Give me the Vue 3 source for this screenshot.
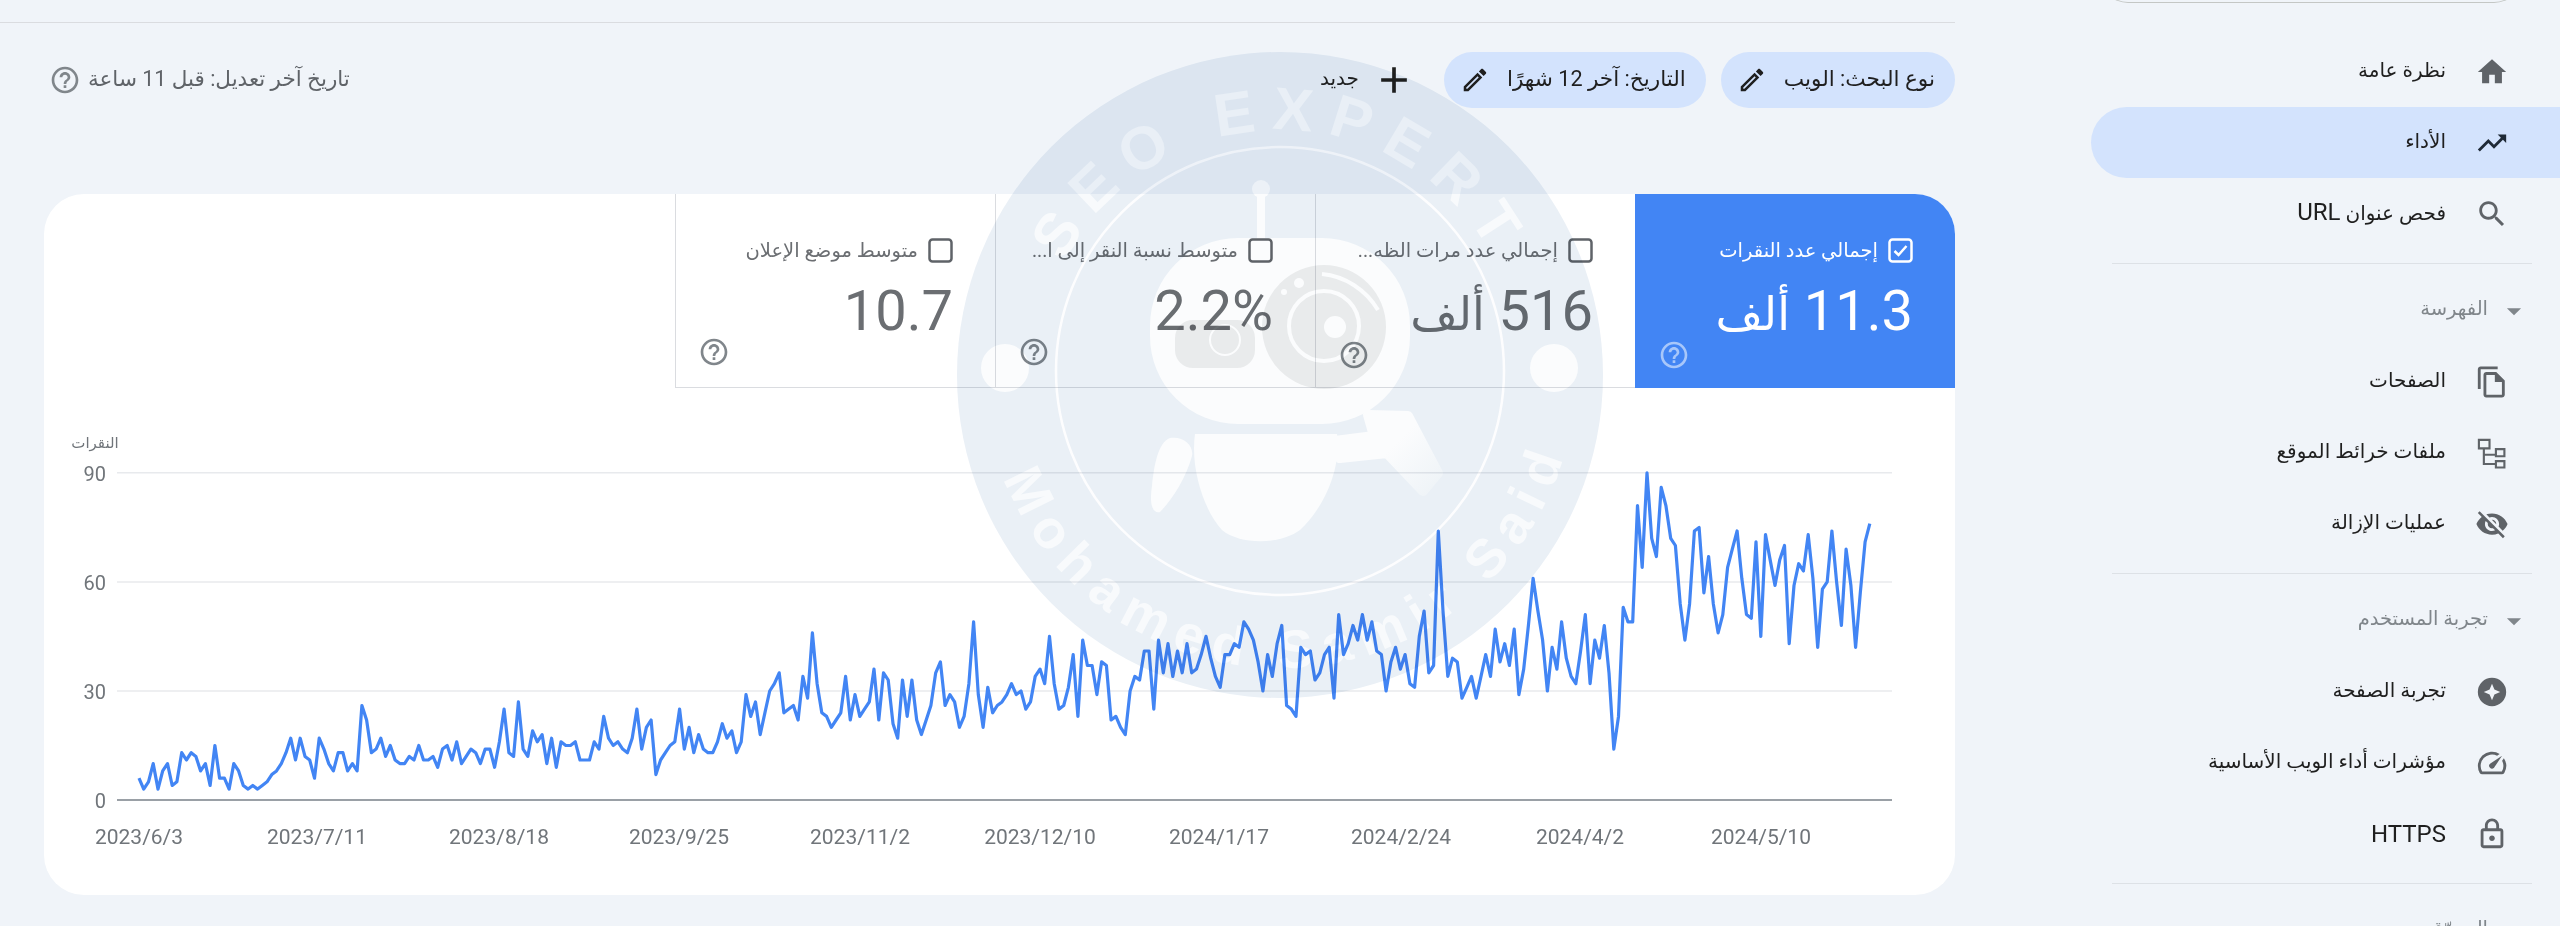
<template>
  <div class="page">
    <aside class="sidebar">
      <div class="search-stub"></div>
      <nav class="nav">
        <template v-for="(group, gi) in navGroups" :key="gi">
          <div v-if="group.title" class="nav-head">
            <svg class="caret" viewBox="0 0 24 24"><path d="M7 10l5 5 5-5z" /></svg>
            <span class="nudge">{{ group.title }}</span>
          </div>
          <a
            v-for="item in group.items"
            :key="item.label + item.latin"
            class="nav-item"
            :class="{ active: item.active }"
          >
            <svg class="nav-icon" viewBox="0 0 24 24"><path fill-rule="evenodd" :d="icons[item.icon]" /></svg>
            <span :class="{ nudge: item.label }">{{ item.label }} <span v-if="item.latin" class="latin">{{ item.latin }}</span></span>
          </a>
          <div v-if="gi < navGroups.length - 1" class="nav-divider"></div>
        </template>
      </nav>
    </aside>

    <main class="main">
      <div class="top-rule"></div>

      <div class="toolbar">
        <button v-for="chip in chips" :key="chip" class="chip">
          <span class="nudge">{{ chip }}</span>
          <svg class="chip-icon" viewBox="0 0 24 24"><path :d="icons.edit" /></svg>
        </button>
        <button class="add-btn">
          <svg class="add-icon" viewBox="0 0 24 24"><path d="M19 13h-6v6h-2v-6H5v-2h6V5h2v6h6v2z" /></svg>
          <span class="nudge">جديد</span>
        </button>
        <div class="updated">
          <span class="nudge">تاريخ آخر تعديل: قبل 11 ساعة</span>
          <svg class="help" viewBox="0 0 24 24"><path :d="icons.help" /></svg>
        </div>
      </div>

      <section class="card">
        <div class="tiles">
          <div v-for="tile in tiles" :key="tile.label" class="tile" :class="{ selected: tile.selected }">
            <div class="tile-label">
              <svg class="check" viewBox="0 0 25 25">
                <rect x="1.5" y="1.5" width="22" height="22" rx="3" />
                <path v-if="tile.selected" d="M6.5 13l4 4 8-9" />
              </svg>
              <span>{{ tile.label }}</span>
            </div>
            <div class="tile-value">{{ tile.value }} <span v-if="tile.unit" class="unit">{{ tile.unit }}</span></div>
            <svg class="help tile-help" viewBox="0 0 24 24"><path :d="icons.help" /></svg>
          </div>
        </div>

        <svg class="chart" viewBox="44 388 1911 507">
          <text class="axis-title" x="95" y="448">النقرات</text>
          <g v-for="tick in yTicks" :key="tick.label">
            <line class="grid" :class="{ base: tick.label === 0 }" x1="117" x2="1892" :y1="tick.y" :y2="tick.y" />
            <text class="y-label" x="106" :y="tick.y + 8">{{ tick.label }}</text>
          </g>
          <text v-for="d in xTicks" :key="d.label" class="x-label" :x="d.x" y="844">{{ d.label }}</text>
          <polyline class="line" :points="linePoints" />
        </svg>
      </section>
    </main>

    <!-- watermark stamp, multiplied over the screenshot so text stays dark -->
    <svg class="stamp" viewBox="0 0 2560 926">
      <defs>
        <linearGradient id="handle-fade" x1="1370" y1="420" x2="1440" y2="490" gradientUnits="userSpaceOnUse">
          <stop offset="0.35" stop-color="#fbfcfd" />
          <stop offset="1" stop-color="#eef3f7" />
        </linearGradient>
        <path id="stamp-top" d="M1038 372A242 242 0 0 1 1522 372" />
        <path id="stamp-bottom" d="M984 372A296 296 0 0 0 1576 372" />
      </defs>
      <circle cx="1280" cy="375" r="323" fill="#eaf0f6" />
      <circle cx="1280" cy="371" r="224" fill="none" stroke="#fdfdfe" stroke-width="2.5" />
      <g fill="#fbfcfd">
        <circle cx="1005" cy="368" r="24" />
        <circle cx="1554" cy="368" r="24" />
        <circle cx="1261" cy="189" r="9" />
        <rect x="1257" y="195" width="8" height="48" />
        <rect x="1150" y="238" width="260" height="186" rx="88" />
        <path d="M1195 434H1337C1342 470 1322 510 1300 530 1280 545 1240 545 1222 530 1205 512 1190 470 1195 434Z" />
        <path d="M1170 438C1184 436 1194 446 1192 456 1186 478 1172 500 1160 512 1150 514 1150 498 1152 486 1154 466 1158 442 1170 438Z" />
      </g>
      <path
        fill="url(#handle-fade)"
        stroke="url(#handle-fade)"
        stroke-width="10"
        stroke-linejoin="round"
        d="M1335 441 1374 436 1368 415 1408 416 1438 473 1423 491 1387 453 1340 458Z"
      />
      <g fill="#e9ebec">
        <circle cx="1324" cy="327" r="62" />
        <rect x="1175" y="320" width="80" height="48" rx="18" />
      </g>
      <g fill="none" stroke="#fbfcfd">
        <circle cx="1324" cy="326" r="35" stroke-width="4" />
        <circle cx="1225" cy="340" r="15" stroke-width="2" />
        <path d="M1322 274C1345 276 1366 290 1378 310" stroke-width="4" />
      </g>
      <g fill="#fbfcfd">
        <circle cx="1335" cy="327" r="11" />
        <circle cx="1299" cy="283" r="5" />
        <circle cx="1284" cy="292" r="3" />
      </g>
      <text class="stamp-text top">
        <textPath href="#stamp-top" startOffset="50%">SEO EXPERT</textPath>
      </text>
      <text class="stamp-text bottom">
        <textPath href="#stamp-bottom" startOffset="51.7%">Mohamed Samir Said</textPath>
      </text>
    </svg>
  </div>
</template>

<script setup>
import { computed } from 'vue'

const icons = {
  home: 'M10 20v-6h4v6h5v-8h3L12 3 2 12h3v8z',
  trend: 'M16 6l2.29 2.29-4.88 4.88-4-4L2 16.59 3.41 18l6-6 4 4 6.3-6.29L22 12V6z',
  search: 'M15.5 14h-.79l-.28-.27C15.41 12.59 16 11.11 16 9.5 16 5.91 13.09 3 9.5 3S3 5.91 3 9.5 5.91 16 9.5 16c1.61 0 3.09-.59 4.23-1.57l.27.28v.79l5 4.99L20.49 19l-4.99-5zm-6 0C7.01 14 5 11.99 5 9.5S7.01 5 9.5 5 14 7.01 14 9.5 11.99 14 9.5 14z',
  pages: 'M16 1H4c-1.1 0-2 .9-2 2v14h2V3h12V1zm-1 4H8c-1.1 0-1.99.9-1.99 2L6 21c0 1.1.89 2 1.99 2H19c1.1 0 2-.9 2-2V11l-6-6zM8 21V7h6v5h5v9H8z',
  sitemap: 'M2 2h9v7.5H2zM3.5 3.5V8h6V3.5zM5.5 9.5H7v3h7v1.5H7v5h7v1.5H5.5zM14 8.5h7.5V15H14zM15.5 10v3.5H20V10zM14 17h7.5v6H14zM15.5 18.5v3H20v-3z',
  hidden: 'M12 7c2.76 0 5 2.24 5 5 0 .65-.13 1.26-.36 1.83l2.92 2.92c1.51-1.26 2.7-2.89 3.43-4.75-1.73-4.39-6-7.5-11-7.5-1.4 0-2.74.25-3.98.7l2.16 2.16C10.74 7.13 11.35 7 12 7zM2 4.27l2.28 2.28.46.46C3.08 8.3 1.78 10.02 1 12c1.73 4.39 6 7.5 11 7.5 1.55 0 3.03-.3 4.38-.84l.42.42L19.73 22 21 20.73 3.27 3 2 4.27zM7.53 9.8l1.55 1.55c-.05.21-.08.43-.08.65 0 1.66 1.34 3 3 3 .22 0 .44-.03.65-.08l1.55 1.55c-.67.33-1.41.53-2.2.53-2.76 0-5-2.24-5-5 0-.79.2-1.53.53-2.2zm4.31-.78l3.15 3.15.02-.16c0-1.66-1.34-3-3-3l-.17.01z',
  spark: 'M12 2a10 10 0 1 0 0 20 10 10 0 0 0 0-20zM12 6.2l1.7 4.1 4.1 1.7-4.1 1.7-1.7 4.1-1.7-4.1-4.1-1.7 4.1-1.7z',
  speed: 'M20.38 8.57l-1.23 1.85a8 8 0 0 1-.22 7.58H5.07A8 8 0 0 1 15.58 6.85l1.85-1.23A10 10 0 0 0 3.35 19a2 2 0 0 0 1.72 1h13.85a2 2 0 0 0 1.74-1 10 10 0 0 0-.27-10.44zm-9.79 6.84a2 2 0 0 0 2.83 0l5.66-8.49-8.49 5.66a2 2 0 0 0 0 2.83z',
  lock: 'M18 8h-1V6c0-2.76-2.24-5-5-5S7 3.24 7 6v2H6c-1.1 0-2 .9-2 2v10c0 1.1.9 2 2 2h12c1.1 0 2-.9 2-2V10c0-1.1-.9-2-2-2zM9 6c0-1.66 1.34-3 3-3s3 1.34 3 3v2H9V6zM18 20H6V10h12v10zM12 17c1.1 0 2-.9 2-2s-.9-2-2-2-2 .9-2 2 .9 2 2 2z',
  edit: 'M3 17.25V21h3.75L17.81 9.94l-3.75-3.75L3 17.25zM5.92 19H5v-.92l9.06-9.06.92.92L5.92 19zM20.71 5.63l-2.34-2.34c-.2-.2-.45-.29-.71-.29s-.51.1-.7.29l-1.83 1.83 3.75 3.75 1.83-1.83c.39-.39.39-1.02 0-1.41z',
  help: 'M11 18h2v-2h-2v2zm1-16C6.48 2 2 6.48 2 12s4.48 10 10 10 10-4.48 10-10S17.52 2 12 2zm0 18c-4.41 0-8-3.59-8-8s3.59-8 8-8 8 3.59 8 8-3.59 8-8 8zm0-14c-2.21 0-4 1.79-4 4h2c0-1.1.9-2 2-2s2 .9 2 2c0 2-3 1.75-3 5h2c0-2.25 3-2.5 3-5 0-2.21-1.79-4-4-4z'
}

const navGroups = [
  {
    items: [
      { label: 'نظرة عامة', icon: 'home' },
      { label: 'الأداء', icon: 'trend', active: true },
      { label: 'فحص عنوان', latin: 'URL', icon: 'search' }
    ]
  },
  {
    title: 'الفهرسة',
    items: [
      { label: 'الصفحات', icon: 'pages' },
      { label: 'ملفات خرائط الموقع', icon: 'sitemap' },
      { label: 'عمليات الإزالة', icon: 'hidden' }
    ]
  },
  {
    title: 'تجربة المستخدم',
    items: [
      { label: 'تجربة الصفحة', icon: 'spark' },
      { label: 'مؤشرات أداء الويب الأساسية', icon: 'speed' },
      { label: '', latin: 'HTTPS', icon: 'lock' }
    ]
  },
  { title: 'التسوّق', items: [] }
]

const chips = ['نوع البحث: الويب', 'التاريخ: آخر 12 شهرًا']

const tiles = [
  { label: 'إجمالي عدد النقرات', value: '11.3', unit: 'ألف', selected: true },
  { label: 'إجمالي عدد مرات الظه...', value: '516', unit: 'ألف' },
  { label: 'متوسط نسبة النقر إلى ا...', value: '2.2%' },
  { label: 'متوسط موضع الإعلان', value: '10.7' }
]

// daily clicks, read off the chart
const clicks = [
  6, 3, 5, 10, 3, 8, 10, 4, 5, 13, 11, 13, 12, 8, 10, 4, 15, 6, 6, 3, 10, 8, 4, 3, 4, 3, 4, 5, 7, 8, 10, 13, 17, 11, 17, 12,
  11, 6, 17, 14, 10, 8, 13, 13, 8, 10, 8, 26, 22, 13, 14, 17, 12, 15, 11, 10, 10, 12, 11, 15, 11, 11, 12, 9, 14, 15, 11, 16,
  10, 12, 14, 13, 10, 14, 14, 9, 16, 25, 13, 12, 27, 14, 12, 19, 16, 18, 10, 17, 9, 16, 15, 15, 16, 11, 11, 11, 16, 14, 23,
  17, 15, 16, 14, 13, 17, 25, 14, 20, 22, 7, 11, 13, 15, 16, 25, 14, 20, 13, 18, 14, 13, 13, 16, 21, 17, 19, 13,
  16, 29, 23, 27, 18, 24, 30, 32, 35, 24, 25, 26, 22, 34, 28, 46, 32, 24, 23, 20, 22, 24, 34, 22, 29, 23, 25, 27, 36, 22, 35,
  33, 21, 17, 33, 23, 33, 22, 18, 22, 26, 35, 38, 26, 29, 27, 20, 23, 32, 49, 29, 20, 31, 24, 26, 27, 29, 32, 29, 30, 25, 27,
  34, 36, 32, 45, 32, 25, 26, 31, 40, 23, 44, 37, 37, 29, 38, 37, 22, 23, 20, 18, 30, 34, 33, 41, 41, 25, 44, 35, 43, 34, 41,
  35, 43, 35, 36, 40, 45, 39, 34, 31, 40, 40, 43, 42, 49, 47, 44, 38, 30, 40, 34, 43, 48, 26, 25, 23,
  42, 40, 41, 33, 35, 40, 42, 28, 51, 40, 43, 48, 44, 51, 44, 49, 41, 40, 30, 38, 42, 36, 40, 32, 31, 45, 52, 35, 37, 74, 52,
  34, 39, 38, 28, 31, 34, 28, 34, 40, 34, 47, 38, 43, 37, 47, 29, 36, 48, 61, 52, 44, 30, 42, 36, 49, 39, 34, 32, 41, 51, 32,
  44, 39, 48, 35, 14, 23, 53, 49, 49, 81, 64, 90, 72, 67, 86, 81, 72, 70, 54, 44, 54, 74, 75, 57, 67, 54, 46, 51, 64, 69, 74,
  61, 51, 50, 71, 45, 73, 66, 59, 66, 70, 43, 59, 65, 63, 73, 61, 42, 58, 60, 74, 60, 48, 69, 59, 42, 57, 71, 76
]

const xFor = (i) => 139 + i * 4.742
const yFor = (v) => 800 - v * 3.635

const linePoints = computed(() =>
  clicks.map((v, i) => `${xFor(i).toFixed(1)},${yFor(v).toFixed(1)}`).join(' ')
)

const yTicks = [90, 60, 30, 0].map((label) => ({ label, y: yFor(label) }))

const xTicks = [
  { label: '2023/6/3', x: 139 },
  { label: '2023/7/11', x: 317 },
  { label: '2023/8/18', x: 499 },
  { label: '2023/9/25', x: 679 },
  { label: '2023/11/2', x: 860 },
  { label: '2023/12/10', x: 1040 },
  { label: '2024/1/17', x: 1219 },
  { label: '2024/2/24', x: 1401 },
  { label: '2024/4/2', x: 1580 },
  { label: '2024/5/10', x: 1761 }
]
</script>

<style scoped>
.page {
  position: relative;
  direction: rtl;
  display: flex;
  justify-content: space-between;
  width: 2560px;
  height: 926px;
  overflow: hidden;
  background: #f0f4f9;
  font-family: Roboto, "DejaVu Sans", sans-serif;
  color: #1f1f1f;
}

/* DejaVu's arabic sits low in the line box */
.nudge {
  padding-bottom: 4px;
}

/* sidebar */
.sidebar {
  flex: none;
  width: 469px;
}

.search-stub {
  height: 40px;
  margin-top: -37px;
  margin-inline: 38px 9px;
  border: 1px solid #c4c7c5;
  border-top: 0;
  border-radius: 0 0 28px 28px;
  box-sizing: border-box;
}

.nav {
  padding-top: 33px;
}

.nav-item,
.nav-head {
  display: flex;
  align-items: center;
  height: 71px;
  font-size: 20px;
}

.nav-item {
  gap: 29px;
  padding-inline-start: 51px;
}

.latin {
  font-size: 24px;
}

.nav-item.active {
  background: #d3e3fd;
  border-radius: 36px 0 0 36px;
}

.nav-icon {
  flex: none;
  width: 34px;
  height: 34px;
  fill: #5f6368;
}

.nav-item.active .nav-icon {
  fill: #1f2a37;
}

.nav-head {
  gap: 9px;
  padding-inline-start: 29px;
  font-size: 19.5px;
  color: #80868b;
}

.caret {
  width: 34px;
  height: 34px;
  fill: #80868b;
}

.nav-divider {
  height: 1px;
  margin: 14px 28px 11px 21px;
  background: #dde1e6;
}

/* main column */
.main {
  flex: none;
  width: 1955px;
}

.top-rule {
  height: 22px;
  border-bottom: 1px solid #dadce0;
}

.toolbar {
  display: flex;
  align-items: center;
  gap: 15px;
  height: 56px;
  margin-top: 29px;
  padding-left: 49px;
}

.chip {
  display: flex;
  align-items: center;
  gap: 17px;
  height: 56px;
  padding: 0 20px 0 16px;
  border: 0;
  border-radius: 28px;
  background: #d3e3fd;
  font: inherit;
  font-size: 21.6px;
  color: #1f1f1f;
}

.chip-icon {
  width: 30px;
  height: 30px;
  fill: #1f1f1f;
}

.add-btn {
  display: flex;
  align-items: center;
  gap: 13px;
  margin-inline-start: 13px;
  padding: 0;
  border: 0;
  background: none;
  font: inherit;
  font-size: 20px;
  color: #1f1f1f;
}

.add-icon {
  width: 44px;
  height: 44px;
  fill: #1f1f1f;
}

.updated {
  display: flex;
  align-items: center;
  gap: 7px;
  margin-inline-start: auto;
  font-size: 21.5px;
  color: #5f6368;
}

.help {
  flex: none;
  width: 32px;
  height: 32px;
  fill: #80868b;
}

.card {
  height: 701px;
  margin-top: 86px;
  margin-left: 44px;
  border-radius: 40px;
  background: #fff;
  overflow: hidden;
}

.tiles {
  display: flex;
}

.tile {
  display: flex;
  flex-direction: column;
  width: 320px;
  height: 194px;
  padding: 44px 42px 0 22px;
  border-left: 1px solid #dadce0;
  border-bottom: 1px solid #dadce0;
  box-sizing: border-box;
  color: #6b6e72;
}

.tile.selected {
  background: #4285f4;
  border-color: #4285f4;
  color: #fff;
}

.tile-label {
  display: flex;
  align-items: center;
  gap: 10px;
  height: 25px;
  font-size: 19.5px;
  white-space: nowrap;
}

.check {
  flex: none;
  width: 25px;
  height: 25px;
  fill: none;
  stroke: #5f6368;
  stroke-width: 2.5;
}

.selected .check {
  stroke: #fff;
}

.tile-value {
  margin-top: 23px;
  font-size: 56px;
  line-height: 50px;
  white-space: nowrap;
}

.unit {
  font-size: 46px;
}

.tile-help {
  align-self: flex-end;
}

.selected .tile-help {
  fill: #a8c7fa;
}

/* chart */
.chart {
  display: block;
  width: 1911px;
  height: 507px;
  direction: ltr;
}

.chart text {
  font-family: Roboto, "DejaVu Sans", sans-serif;
  fill: #70757a;
}

.axis-title {
  font-size: 15px;
  text-anchor: middle;
  direction: rtl;
}

.y-label {
  font-size: 20px;
  text-anchor: end;
}

.x-label {
  font-size: 21px;
  text-anchor: middle;
}

.grid {
  stroke: #e8eaed;
  stroke-width: 1.5;
}

.grid.base {
  stroke: #9aa0a6;
  stroke-width: 2;
}

.line {
  fill: none;
  stroke: #4285f4;
  stroke-width: 3.2;
  stroke-linejoin: round;
}

/* stamp */
.stamp {
  position: absolute;
  inset: 0;
  width: 2560px;
  height: 926px;
  direction: ltr;
  mix-blend-mode: multiply;
  pointer-events: none;
}

.stamp-text {
  font-family: "Liberation Sans", sans-serif;
  font-weight: 700;
  text-anchor: middle;
  fill: #f8fafc;
}

.stamp-text.top {
  font-size: 60px;
  letter-spacing: 15px;
}

.stamp-text.bottom {
  font-size: 54px;
  letter-spacing: 11px;
}
</style>

<style>
html,
body {
  margin: 0;
  background: #f0f4f9;
}
</style>
